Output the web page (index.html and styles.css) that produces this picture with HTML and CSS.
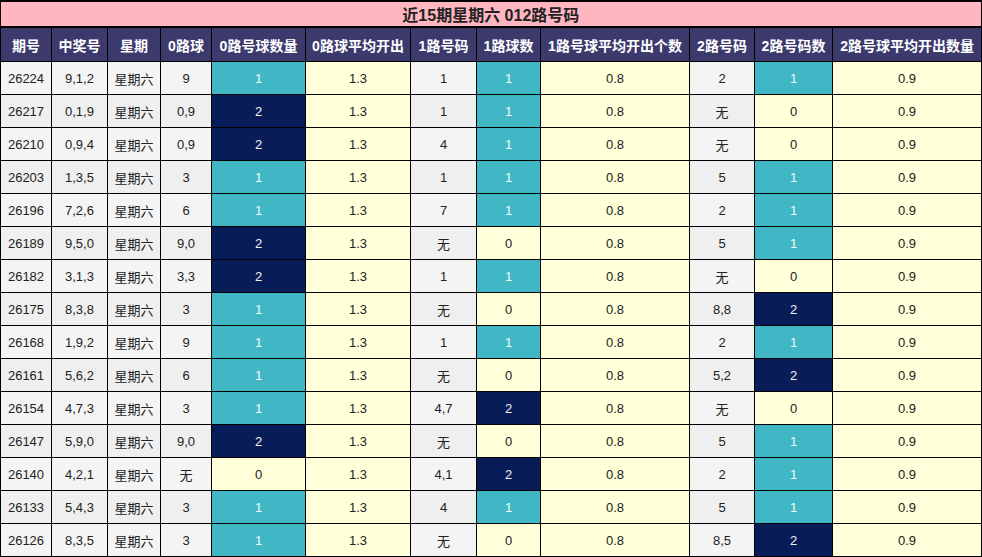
FILE: index.html
```html
<!DOCTYPE html>
<html lang="zh">
<head>
<meta charset="utf-8">
<link rel="stylesheet" href="styles.css">
</head>
<body>
<table class="grid">
<colgroup>
<col class="c1"><col class="c2"><col class="c3"><col class="c4"><col class="c5"><col class="c6"><col class="c7"><col class="c8"><col class="c9"><col class="c10"><col class="c11"><col class="c12">
</colgroup>
<thead>
<tr><th class="title" colspan="12">近15期星期六 012路号码</th></tr>
<tr class="head">
<th>期号</th><th>中奖号</th><th>星期</th><th>0路球</th><th>0路号球数量</th><th>0路球平均开出</th><th>1路号码</th><th>1路球数</th><th>1路号球平均开出个数</th><th>2路号码</th><th>2路号码数</th><th>2路号球平均开出数量</th>
</tr>
</thead>
<tbody id="rows">
<tr><td>26224</td><td>9,1,2</td><td>星期六</td><td>9</td><td class="v1">1</td><td class="y">1.3</td><td>1</td><td class="v1">1</td><td class="y">0.8</td><td>2</td><td class="v1">1</td><td class="y">0.9</td></tr>
<tr><td>26217</td><td>0,1,9</td><td>星期六</td><td>0,9</td><td class="v2">2</td><td class="y">1.3</td><td>1</td><td class="v1">1</td><td class="y">0.8</td><td>无</td><td class="y">0</td><td class="y">0.9</td></tr>
<tr><td>26210</td><td>0,9,4</td><td>星期六</td><td>0,9</td><td class="v2">2</td><td class="y">1.3</td><td>4</td><td class="v1">1</td><td class="y">0.8</td><td>无</td><td class="y">0</td><td class="y">0.9</td></tr>
<tr><td>26203</td><td>1,3,5</td><td>星期六</td><td>3</td><td class="v1">1</td><td class="y">1.3</td><td>1</td><td class="v1">1</td><td class="y">0.8</td><td>5</td><td class="v1">1</td><td class="y">0.9</td></tr>
<tr><td>26196</td><td>7,2,6</td><td>星期六</td><td>6</td><td class="v1">1</td><td class="y">1.3</td><td>7</td><td class="v1">1</td><td class="y">0.8</td><td>2</td><td class="v1">1</td><td class="y">0.9</td></tr>
<tr><td>26189</td><td>9,5,0</td><td>星期六</td><td>9,0</td><td class="v2">2</td><td class="y">1.3</td><td>无</td><td class="y">0</td><td class="y">0.8</td><td>5</td><td class="v1">1</td><td class="y">0.9</td></tr>
<tr><td>26182</td><td>3,1,3</td><td>星期六</td><td>3,3</td><td class="v2">2</td><td class="y">1.3</td><td>1</td><td class="v1">1</td><td class="y">0.8</td><td>无</td><td class="y">0</td><td class="y">0.9</td></tr>
<tr><td>26175</td><td>8,3,8</td><td>星期六</td><td>3</td><td class="v1">1</td><td class="y">1.3</td><td>无</td><td class="y">0</td><td class="y">0.8</td><td>8,8</td><td class="v2">2</td><td class="y">0.9</td></tr>
<tr><td>26168</td><td>1,9,2</td><td>星期六</td><td>9</td><td class="v1">1</td><td class="y">1.3</td><td>1</td><td class="v1">1</td><td class="y">0.8</td><td>2</td><td class="v1">1</td><td class="y">0.9</td></tr>
<tr><td>26161</td><td>5,6,2</td><td>星期六</td><td>6</td><td class="v1">1</td><td class="y">1.3</td><td>无</td><td class="y">0</td><td class="y">0.8</td><td>5,2</td><td class="v2">2</td><td class="y">0.9</td></tr>
<tr><td>26154</td><td>4,7,3</td><td>星期六</td><td>3</td><td class="v1">1</td><td class="y">1.3</td><td>4,7</td><td class="v2">2</td><td class="y">0.8</td><td>无</td><td class="y">0</td><td class="y">0.9</td></tr>
<tr><td>26147</td><td>5,9,0</td><td>星期六</td><td>9,0</td><td class="v2">2</td><td class="y">1.3</td><td>无</td><td class="y">0</td><td class="y">0.8</td><td>5</td><td class="v1">1</td><td class="y">0.9</td></tr>
<tr><td>26140</td><td>4,2,1</td><td>星期六</td><td>无</td><td class="y">0</td><td class="y">1.3</td><td>4,1</td><td class="v2">2</td><td class="y">0.8</td><td>2</td><td class="v1">1</td><td class="y">0.9</td></tr>
<tr><td>26133</td><td>5,4,3</td><td>星期六</td><td>3</td><td class="v1">1</td><td class="y">1.3</td><td>4</td><td class="v1">1</td><td class="y">0.8</td><td>5</td><td class="v1">1</td><td class="y">0.9</td></tr>
<tr><td>26126</td><td>8,3,5</td><td>星期六</td><td>3</td><td class="v1">1</td><td class="y">1.3</td><td>无</td><td class="y">0</td><td class="y">0.8</td><td>8,5</td><td class="v2">2</td><td class="y">0.9</td></tr>
</tbody>
</table>
</body>
</html>
```
FILE: styles.css
```css
html, body {
  margin: 0;
  padding: 0;
  background: #ffffff;
}
.grid {
  border-collapse: collapse;
  table-layout: fixed;
  width: 982px;
  font-family: "Liberation Sans", "Noto Sans CJK SC", sans-serif;
  font-size: 13px;
  color: #222222;
}
.c1 { width: 51px; }
.c2 { width: 56px; }
.c3 { width: 53px; }
.c4 { width: 51px; }
.c5 { width: 94px; }
.c6 { width: 105px; }
.c7 { width: 66px; }
.c8 { width: 64px; }
.c9 { width: 149px; }
.c10 { width: 65px; }
.c11 { width: 78px; }
.c12 { width: 149px; }
.grid th, .grid td {
  border: 1px solid #000000;
  text-align: center;
  padding: 0;
  white-space: nowrap;
  overflow: hidden;
}
.grid .title {
  height: 24px;
  background: #ffb6c1;
  border-width: 2px 2px 2px 1px;
  font-size: 16px;
  font-weight: bold;
  color: #222222;
}
.head th {
  height: 33px;
  background: #3c3a6c;
  color: #ffffff;
  font-size: 14px;
  font-weight: bold;
}
.grid td {
  height: 32px;
  background: #f4f4f4;
}
.grid tbody tr:nth-child(even) td {
  background: #efefef;
}
.grid tbody tr td.y {
  background: #ffffda;
}
.grid tbody tr td.v1 {
  background: #41b6c4;
  color: #f2fbfc;
}
.grid tbody tr td.v2 {
  background: #081d58;
  color: #f2f2f2;
}
```
